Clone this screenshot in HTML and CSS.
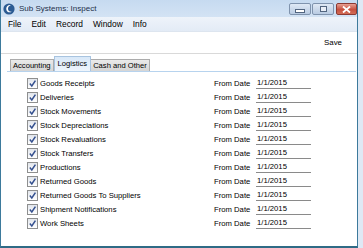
FILE: index.html
```html
<!DOCTYPE html>
<html lang="en">
<head>
    <meta charset="UTF-8">
    <title>Sub Systems: Inspect</title>
    <link rel="stylesheet" href="styles.css">
</head>
<body>
    <div class="window">
        <div class="titlebar">
            <svg class="app-icon" width="12" height="12" viewBox="0 0 12 12">
                <circle cx="6" cy="6" r="5.6" fill="#2b5b93"/>
                <path d="M7.8 2.2 C4.6 1.6 2.4 4.6 3.6 7.4 C4.4 9.2 6.8 10 8.8 8.8 C6.6 9 5 7.6 5 5.8 C5 4 6.2 2.8 7.8 2.2 Z" fill="#ffffff"/>
            </svg>
            <span class="title">Sub Systems: Inspect</span>
            <div class="controls">
                <div class="ctl min"><span class="bar"></span></div>
                <div class="ctl max"><span class="box"></span></div>
                <div class="ctl close">
                    <svg width="9" height="7" viewBox="0 0 9 7">
                        <path d="M1 0.5 L8 6.5 M8 0.5 L1 6.5" stroke="#ffffff" stroke-width="1.8"/>
                    </svg>
                </div>
            </div>
        </div>
        <div class="menubar">
            <span>File</span>
            <span>Edit</span>
            <span>Record</span>
            <span>Window</span>
            <span>Info</span>
        </div>
        <div class="toolbar">
            <span class="save">Save</span>
        </div>
        <div class="content">
            <div class="tabs">
                <div class="tab">Accounting</div>
                <div class="tab active">Logistics</div>
                <div class="tab">Cash and Other</div>
            </div>
            <div class="panel" id="panel"></div>
        </div>
    </div>

    <script>
        const rows = [
            'Goods Receipts',
            'Deliveries',
            'Stock Movements',
            'Stock Depreciations',
            'Stock Revaluations',
            'Stock Transfers',
            'Productions',
            'Returned Goods',
            'Returned Goods To Suppliers',
            'Shipment Notifications',
            'Work Sheets'
        ];
        const panel = document.getElementById('panel');
        const check = '<svg width="9" height="9" viewBox="0 0 9 9"><path d="M1.8 4.6 L3.8 6.9 L7.4 1.6" fill="none" stroke="#34508f" stroke-width="1.5"/></svg>';
        rows.forEach(name => {
            const row = document.createElement('div');
            row.className = 'row';
            row.innerHTML = `<span class="checkbox">${check}</span><span class="label">${name}</span><span class="from">From Date</span><span class="date">1/1/2015</span>`;
            panel.appendChild(row);
        });
    </script>
</body>
</html>
```

FILE: styles.css
```css
body {
    margin: 0;
    font-family: 'Liberation Sans', Arial, sans-serif;
    background-color: #dfe9f5;
    color: #000000;
}
.window {
    width: 358px;
    height: 248px;
    box-sizing: border-box;
    display: flex;
    flex-direction: column;
    border-left: 1px solid #3d7a9c;
    border-right: 1px solid #3d7a9c;
    border-bottom: 2px solid #2f6b86;
    background-color: #ffffff;
    overflow: hidden;
}
.titlebar {
    height: 17px;
    flex: none;
    display: flex;
    align-items: center;
    background: linear-gradient(#c6daf0, #d3e3f4);
    padding-left: 2px;
}
.app-icon {
    margin-right: 4px;
}
.title {
    font-size: 8px;
    color: #1c2f4a;
}
.controls {
    margin-left: auto;
    display: flex;
    gap: 1px;
    align-self: flex-start;
    margin-top: 3px;
    margin-right: 0;
}
.ctl {
    width: 22px;
    height: 12px;
    box-sizing: border-box;
    border: 1px solid #7f93ad;
    border-radius: 2px;
    background: linear-gradient(#dfe9f5, #b9cbe2);
    display: flex;
    justify-content: center;
    align-items: center;
}
.ctl.close {
    width: 21px;
    margin-left: 1px;
    border-color: #8c3a33;
    background: linear-gradient(#e8a093, #c7503f 55%, #d26c55);
}
.bar {
    width: 8px;
    height: 2px;
    margin-top: 3px;
    background-color: #ffffff;
    border: 1px solid #52657f;
}
.box {
    width: 5px;
    height: 4px;
    border: 1px solid #52657f;
    background-color: #e8eef7;
}
.menubar {
    height: 14px;
    flex: none;
    display: flex;
    align-items: center;
    padding-left: 2px;
    font-size: 8.4px;
    background: linear-gradient(#eef3fa, #e3ebf6);
    border-bottom: 1px solid #dde5ef;
}
.menubar span {
    padding: 0 5px;
}
.toolbar {
    height: 21px;
    flex: none;
    display: flex;
    align-items: center;
    justify-content: flex-end;
    padding-right: 15px;
    border-bottom: 1px solid #d9d9d9;
}
.save {
    font-size: 7.9px;
}
.content {
    flex: 1;
    padding: 3px 0 0 6px;
}
.tabs {
    display: flex;
    align-items: flex-end;
    width: 349px;
    height: 15px;
    padding-left: 3px;
    box-sizing: border-box;
    border-bottom: 1px solid #b7d3ee;
    font-size: 7.6px;
}
.tab {
    height: 12px;
    line-height: 12px;
    padding: 0 2px;
    box-sizing: border-box;
    background: linear-gradient(#eaeaea, #d5d5d5);
    border: 1px solid #acacac;
    border-bottom: none;
}
.tab + .tab {
    border-left: none;
}
.tab.active {
    height: 15px;
    line-height: 14px;
    padding: 0 3px;
    border: 1px solid #a8c4e0;
    border-bottom: none;
    background: linear-gradient(#d8e8f8, #eef5fc);
}
.tab.active + .tab {
    border-left: none;
}
.panel {
    padding-top: 4px;
}
.row {
    display: grid;
    grid-template-columns: 12px 175px 42px 55px;
    align-items: center;
    height: 14px;
    padding-left: 20px;
    font-size: 7.7px;
}
.checkbox {
    width: 11px;
    height: 11px;
    box-sizing: border-box;
    border: 1px solid #8e8f8f;
    background: linear-gradient(#e2e6ec, #ffffff);
    display: flex;
    justify-content: center;
    align-items: center;
}
.label {
    padding-left: 1px;
}
.date {
    padding-left: 1px;
    height: 10px;
    line-height: 10px;
    border-bottom: 1px solid #8a8a8a;
}
```
